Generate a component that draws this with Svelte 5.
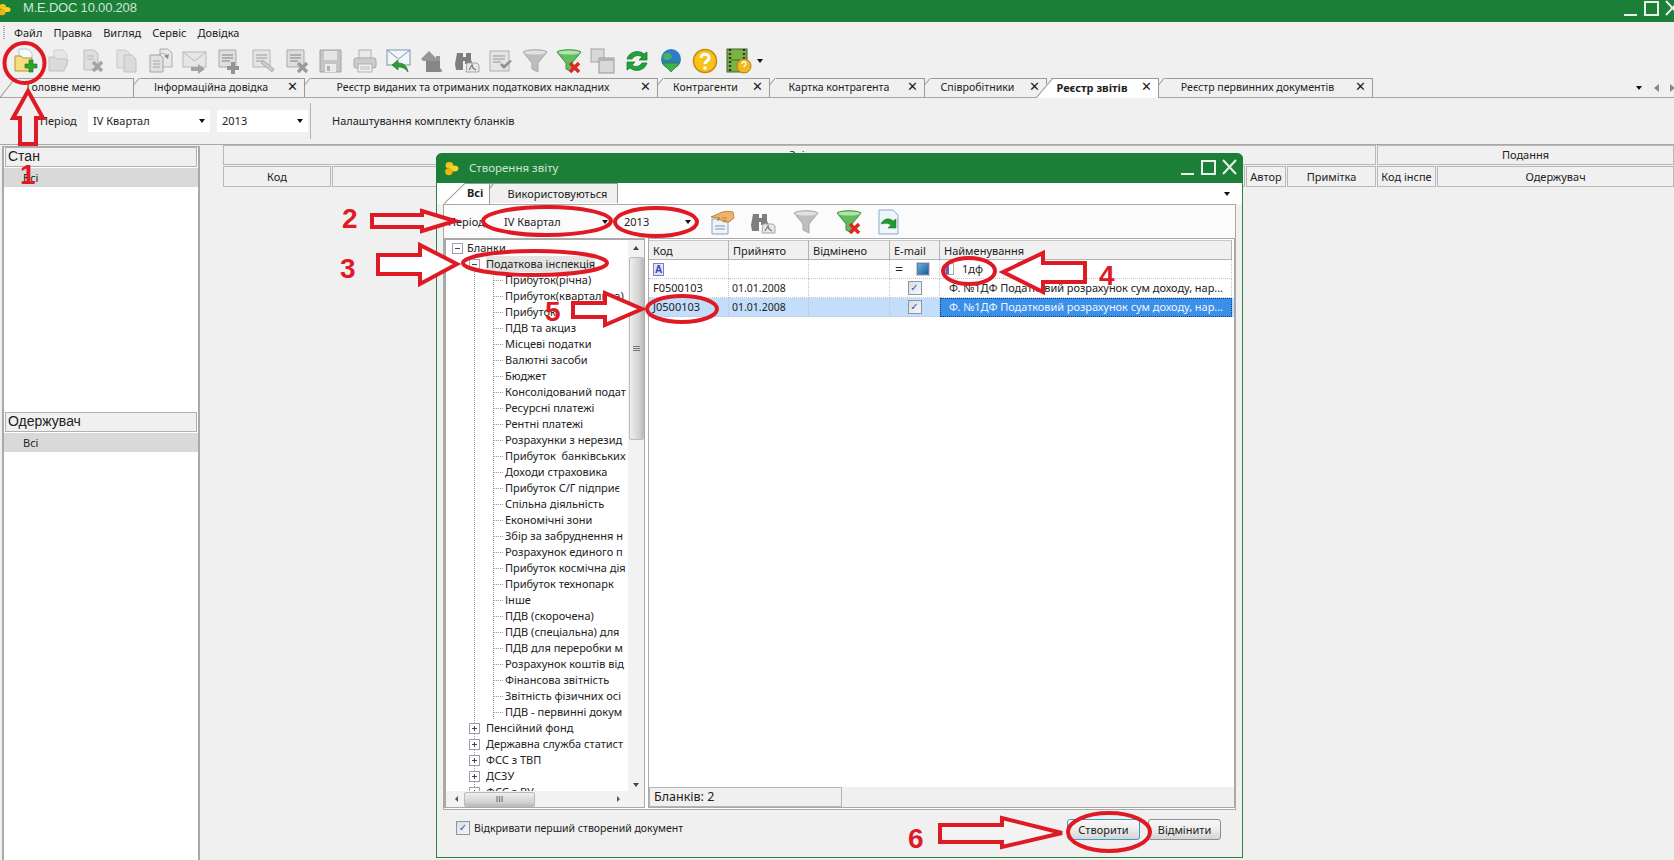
<script>
  const tools = ['new','open','docx','copy','docs','mail','docplus','docedit','docx2','floppy','printer','mailgreen','house','binoc','doccheck','funnel','funnelx','windows','sync','globe','help','film'];
  const tabs = [
    { t:'Головне меню', w:134, first:true, noX:true },
    { t:'Інформаційна довідка', w:171 },
    { t:'Реєстр виданих та отриманих податкових накладних', w:353 },
    { t:'Контрагенти', w:112 },
    { t:'Картка контрагента', w:155 },
    { t:'Співробітники', w:122 },
    { t:'Реєстр звітів', w:122, active:true },
    { t:'Реєстр первинних документів', w:214 }
  ];
  const leaves = ['Прибуток(річна)','Прибуток(квартальна)','Прибуток','ПДВ та акциз','Місцеві податки','Валютні засоби','Бюджет','Консолідований подат','Ресурсні платежі','Рентні платежі','Розрахунки з нерезид','Прибуток  банківських','Доходи страховика','Прибуток С/Г підприє','Спільна діяльність','Економічні зони','Збір за забруднення н','Розрахунок единого п','Прибуток космічна дія','Прибуток технопарк','Інше','ПДВ (скорочена)','ПДВ (спеціальна) для','ПДВ для переробки м','Розрахунок коштів від','Фінансова звітність','Звітність фізичних осі','ПДВ - первинні докум'];
  const groups = ['Пенсійний фонд','Державна служба статист','ФСС з ТВП','ДСЗУ','ФСС з ВУ'];
  const doc = 'Ф. №1ДФ Податковий розрахунок сум доходу, нар...';
</script>

{#snippet icon(n, s = 26)}
  <svg class="ic" width={s} height={s} viewBox="0 0 26 26" aria-hidden="true">
    {#if n==='new'}
      <path d="M7 1h9l4 4v11H7z" fill="#f7fafd" stroke="#b9c6d6"/>
      <path d="M3 8h6l2 2h9l-2 13H3z" fill="#f6dd7e" stroke="#b8922e"/>
      <path d="M17 12h4v4h4v4h-4v4h-4v-4h-4v-4h4z" fill="#27a52f" stroke="#17702a" stroke-width=".6"/>
    {:else if n==='open'}
      <path d="M8 2h9l4 4v12H8z" fill="#e6e6e6" stroke="#cfcfcf"/>
      <path d="M3 9h6l2 2h8l3 1-4 11H3z" fill="#dadada" stroke="#c2c2c2"/>
    {:else if n==='docx'}
      <path d="M4 2h10l4 4v16H4z" fill="#dedede" stroke="#bdbdbd"/>
      <path d="M7 8h7M7 11h7" stroke="#b8b8b8"/>
      <path d="M13 14l9 9M22 14l-9 9" stroke="#a4a4a4" stroke-width="3.400"/>
    {:else if n==='copy'}
      <path d="M3 2h9l4 4v14H3z" fill="#e2e2e2" stroke="#cacaca"/>
      <path d="M10 7h8l4 4v13H10z" fill="#dadada" stroke="#c2c2c2"/>
    {:else if n==='docs'}
      <path d="M12 1h8l4 4v14H12z" fill="#e8e8e8" stroke="#ababab"/>
      <path d="M2 7h10l3 3v14H2z" fill="#e0e0e0" stroke="#a6a6a6"/>
      <path d="M5 13h7M5 16h7M5 19h7" stroke="#aaa"/>
      <path d="M9 9c3-4 7-4 9-2l-2 1 4 3 1-5-2 1c-3-3-8-2-10 2z" fill="#8c8c8c"/>
    {:else if n==='mail'}
      <rect x="1" y="4" width="23" height="15" fill="#e6e6e6" stroke="#b8b8b8"/>
      <path d="M1 4l11.500 9L24 4" fill="none" stroke="#b8b8b8"/>
      <path d="M9 19h7v-3l7 5-7 5v-3H9z" fill="#a2a2a2"/>
    {:else if n==='docplus'}
      <path d="M3 2h17v17H3z" fill="#dedede" stroke="#a9a9a9"/>
      <path d="M6 7h11M6 10h11M6 13h8" stroke="#a0a0a0" stroke-width="1.400"/>
      <path d="M15 14h4v4h4v4h-4v4h-4v-4h-4v-4h4z" fill="#949494"/>
    {:else if n==='docedit'}
      <path d="M3 2h17v17H3z" fill="#e4e4e4" stroke="#b6b6b6"/>
      <path d="M6 7h11M6 10h11M6 13h8" stroke="#b2b2b2" stroke-width="1.400"/>
      <path d="M11 15l3-2 10 8-2 3z" fill="#cacaca" stroke="#aeaeae"/>
    {:else if n==='docx2'}
      <path d="M3 2h17v17H3z" fill="#dedede" stroke="#a9a9a9"/>
      <path d="M6 7h11M6 10h11M6 13h8" stroke="#a0a0a0" stroke-width="1.400"/>
      <path d="M14 15l9 9M23 15l-9 9" stroke="#9a9a9a" stroke-width="3.400"/>
    {:else if n==='floppy'}
      <path d="M2 2h21v22H2z" fill="#c4c4c4" stroke="#a4a4a4"/>
      <rect x="6" y="3" width="13" height="9" fill="#e4e4e4"/>
      <rect x="7" y="16" width="11" height="8" fill="#eaeaea"/>
      <rect x="9" y="18" width="3" height="5" fill="#b0b0b0"/>
    {:else if n==='printer'}
      <rect x="7" y="2" width="12" height="9" fill="#eaeaea" stroke="#b0b0b0"/>
      <rect x="2" y="10" width="22" height="10" rx="2" fill="#cccccc" stroke="#a8a8a8"/>
      <rect x="6" y="16" width="14" height="8" fill="#f0f0f0" stroke="#b0b0b0"/>
      <path d="M8 19h10M8 21h10" stroke="#bbb"/>
    {:else if n==='mailgreen'}
      <rect x="1" y="2" width="23" height="15" fill="#f2f6fb" stroke="#7f93ad"/>
      <path d="M1 2l11.500 9L24 2" fill="none" stroke="#7f93ad"/>
      <path d="M6 17l6-5v3c6 0 9 3 10 9-3-4-6-5-10-5v3z" fill="#2ca02c" stroke="#176c1d" stroke-width=".6"/>
    {:else if n==='house'}
      <path d="M1 11L9 3l7 7v-2h4v12l2 2v2H6V13H3z" fill="#979797"/>
      <path d="M6 13h14v11H6z" fill="#868686"/>
    {:else if n==='binoc'}
      <path d="M3 5h6v4h3V5h5v7l2 4H11v-3H9v9H2l-1-6z" fill="#7e7e7e"/>
      <path d="M13 15h10l2 2v7H12z" fill="#e8e8e8" stroke="#a6a6a6"/>
      <path d="M15 22l3-5 1 3 3 2" fill="none" stroke="#777" stroke-width="1.200"/>
    {:else if n==='doccheck'}
      <rect x="2" y="3" width="19" height="20" fill="#e4e4e4" stroke="#aeaeae"/>
      <path d="M5 8h12M5 11h12M5 14h8" stroke="#aeaeae" stroke-width="1.400"/>
      <path d="M12 17l4 4 8-8-2-1-6 5-2-2z" fill="#909090"/>
    {:else if n==='funnel'}
      <path d="M1 4c4-3 20-3 24 0l-9 11v9l-6-3v-6z" fill="#bebebe" stroke="#a8a8a8"/>
      <ellipse cx="13" cy="4.500" rx="11" ry="2" fill="#e0e0e0"/>
    {:else if n==='funnelx'}
      <path d="M1 4c4-3 20-3 24 0l-9 11v9l-6-3v-6z" fill="#62bb5e" stroke="#3b9040"/>
      <ellipse cx="13" cy="4.500" rx="11" ry="2" fill="#b2e3ac"/>
      <path d="M14 15l9 9M23 15l-9 9" stroke="#db2b20" stroke-width="3.600"/>
    {:else if n==='windows'}
      <rect x="1" y="1" width="13" height="13" fill="#d8d8d8" stroke="#a4a4a4"/>
      <rect x="9" y="10" width="15" height="15" fill="#d8d8d8" stroke="#959595"/>
      <rect x="9" y="10" width="15" height="3" fill="#b4b4b4"/>
    {:else if n==='sync'}
      <path d="M3 11C5 4 14 1 20 6l3-2v8h-8l3-3c-4-3-8-1-10 2z" fill="#22a33a" stroke="#10702a" stroke-width=".7"/>
      <path d="M23 15c-2 7-11 10-17 5l-3 2v-8h8l-3 3c4 3 8 1 10-2z" fill="#22a33a" stroke="#10702a" stroke-width=".7"/>
    {:else if n==='globe'}
      <circle cx="13" cy="11" r="10" fill="#2c7dc6"/>
      <path d="M5 7c3-3 6-3 8 0s-1 5-4 5-4-2-4-5z" fill="#4dae5e"/>
      <path d="M4 15h18l-9 9z" fill="#3db24a" stroke="#208030" stroke-width=".7"/>
    {:else if n==='help'}
      <circle cx="13" cy="13" r="11.500" fill="#f7c21e" stroke="#c98a0c" stroke-width="1.500"/>
      <path d="M9 10c0-5 8-5 8 0 0 3-4 3-4 6" fill="none" stroke="#fff" stroke-width="3"/>
      <circle cx="13" cy="20" r="1.800" fill="#fff"/>
    {:else if n==='film'}
      <rect x="1" y="1" width="20" height="23" fill="#79b342" stroke="#4a5f33"/>
      <path d="M4 1v23M18 1v23" stroke="#333" stroke-width="2.400" stroke-dasharray="2 2"/>
      <path d="M5 12h12" stroke="#3d6a20"/>
      <circle cx="18" cy="18" r="7" fill="#f3b81e" stroke="#b07f14"/>
      <path d="M16 16c0-3 4-3 4 0 0 1.500-2 1.500-2 3" fill="none" stroke="#fff" stroke-width="1.300"/>
    {:else if n==='hand'}
      <path d="M3 10h16v15H3z" fill="#eef3f9" stroke="#8ea3bd"/>
      <path d="M6 17h10M6 20h10" stroke="#7d93ad"/>
      <path d="M2 8l9-4c4-2 9-2 13-1l1 6-5 4-5 0-3-2-4 0 3-2-2 0z" fill="#eeb268" stroke="#a77434" stroke-width=".8"/>
      <path d="M13 9l5 0M14 11.500l4 0" stroke="#a77434" stroke-width=".7"/>
    {:else if n==='arrowdoc'}
      <path d="M3 1h14l5 5v19H3z" fill="#eef5fc" stroke="#8ea9c8"/>
      <path d="M5 15c2-5 8-7 12-3l3-2v9h-8l3-3c-3-2-6-2-10-1z" fill="#1f9a33" stroke="#126d22" stroke-width=".5"/>
    {/if}
  </svg>
{/snippet}

{#snippet blob(s)}
  <svg width={s} height={s} viewBox="0 0 14 14" aria-hidden="true">
    <ellipse cx="5" cy="4" rx="3.500" ry="3" fill="#f5c518"/>
    <ellipse cx="9.500" cy="7" rx="4" ry="2.800" fill="#f8d42a"/>
    <ellipse cx="4.500" cy="10" rx="3.500" ry="3.200" fill="#eeb412"/>
  </svg>
{/snippet}

{#snippet expander(minus)}
  <svg class="exp" width="11" height="11" viewBox="0 0 11 11" aria-hidden="true">
    <rect x=".5" y=".5" width="10" height="10" fill="#fff" stroke="#9aa3ad"/>
    <path d={minus ? 'M3 5.500h5' : 'M3 5.500h5M5.500 3v5'} stroke="#445"/>
  </svg>
{/snippet}

{#snippet wincontrols()}
  <svg class="wc" width="56" height="20" viewBox="0 0 56 20" aria-hidden="true">
    <path d="M0 16h13" stroke="#e8f2e8" stroke-width="2"/>
    <rect x="21" y="3" width="13" height="13" fill="none" stroke="#e8f2e8" stroke-width="2"/>
    <path d="M42 2l13 14M55 2L42 16" stroke="#e8f2e8" stroke-width="2"/>
  </svg>
{/snippet}

<div class="app">
  <header class="titlebar">
    <span class="logo">{@render blob(13)}</span>
    <span class="apptitle">M.E.DOC 10.00.208</span>
    <span class="wc-main">{@render wincontrols()}</span>
  </header>

  <nav class="menubar">
    <span class="grip"></span>
    <span>Файл</span><span>Правка</span><span>Вигляд</span><span>Сервіс</span><span>Довідка</span>
  </nav>

  <div class="toolbar">
    {#each tools as t}
      <span class="tool">{@render icon(t)}</span>
    {/each}
    <span class="caret tool-caret"></span>
  </div>

  <div class="tabs">
    {#each tabs as t}
      <div class="tab" class:first={t.first} class:active={t.active} style="width:{t.w}px">
        <span class="tab-t">{t.t}</span>
        {#if !t.noX}<span class="tab-x">✕</span>{/if}
      </div>
    {/each}
    <div class="tab-nav">
      <span class="caret"></span>
      <span class="tri-l"></span>
      <span class="tri-r"></span>
    </div>
  </div>

  <div class="subbar">
    <span class="lbl">Період</span>
    <div class="combo c1"><span>IV Квартал</span><i class="caret"></i></div>
    <div class="combo c2"><span>2013</span><i class="caret"></i></div>
    <span class="sep"></span>
    <span class="setup">Налаштування комплекту бланків</span>
  </div>

  <main class="main">
    <aside class="left">
      <div class="lh">Стан</div>
      <div class="lrow">Всі</div>
      <div class="lspace"></div>
      <div class="lh">Одержувач</div>
      <div class="lrow">Всі</div>
    </aside>
    <section class="bg-grid">
      <div class="gr g1">
        <div class="gc" style="width:1153px">Звіт</div>
        <div class="gc gc-last">Подання</div>
      </div>
      <div class="gr g2">
        <div class="gc" style="width:108px">Код</div>
        <div class="gc" style="width:913px"></div>
        <div class="gc" style="width:40px">Автор</div>
        <div class="gc" style="width:89px">Примітка</div>
        <div class="gc" style="width:59px">Код інспе</div>
        <div class="gc gc-last">Одержувач</div>
      </div>
    </section>
  </main>

  <div class="dialog">
    <div class="d-title">
      <span class="d-logo">{@render blob(15)}</span>
      <span class="d-name">Створення звіту</span>
      <span class="d-wc">{@render wincontrols()}</span>
    </div>
    <div class="d-tabs">
      <div class="dt dt-active">Всі</div>
      <div class="dt">Використовуються</div>
      <span class="caret d-caret"></span>
    </div>
    <div class="frame">
      <div class="period">
        <span class="p-lbl">Період</span>
        <div class="combo d1"><span>IV Квартал</span><i class="caret"></i></div>
        <div class="combo d2"><span>2013</span><i class="caret"></i></div>
        <div class="d-tools">
          <span class="dtool" style="width:41px">{@render icon('hand')}</span>
          <span class="dtool" style="width:41px">{@render icon('binoc')}</span>
          <span class="dtool" style="width:45px">{@render icon('funnel')}</span>
          <span class="dtool" style="width:41px">{@render icon('funnelx')}</span>
          <span class="dtool" style="width:39px">{@render icon('arrowdoc')}</span>
        </div>
      </div>
      <div class="split">
        <div class="tree">
          <div class="tree-body">
            <div class="tree-list">
              <div class="tr l0">{@render expander(true)}<span>Бланки</span></div>
              <div class="tr l1 line2">{@render expander(true)}<span class="tree-sel">Податкова інспекція</span></div>
              {#each leaves as l}
                <div class="tr l2"><span>{l}</span></div>
              {/each}
              {#each groups as g}
                <div class="tr l1 line2">{@render expander(false)}<span>{g}</span></div>
              {/each}
            </div>
            <div class="vbar">
              <span class="tri-up"></span>
              <div class="vthumb"><b></b><b></b><b></b></div>
              <span class="vfill"></span>
              <span class="tri-down"></span>
            </div>
          </div>
          <div class="hbar">
            <span class="tri-l small"></span>
            <div class="hthumb">III</div>
            <span class="vfill"></span>
            <span class="tri-r small"></span>
          </div>
        </div>
        <div class="gridpane">
          <div class="dg dg-head">
            <div>Код</div><div>Прийнято</div><div>Відмінено</div><div>E-mail</div><div>Найменування</div>
          </div>
          <div class="dg dg-row filter">
            <div><span class="abox">A</span></div>
            <div></div>
            <div></div>
            <div class="fmail"><span class="eq">=</span><span class="bluesq"></span></div>
            <div class="fname"><span class="fdoc"></span><span>1дф</span></div>
          </div>
          <div class="dg dg-row">
            <div>F0500103</div><div class="dt-cell">01.01.2008</div><div></div>
            <div class="chk"><span class="cb">✓</span></div>
            <div class="nm">{doc}</div>
          </div>
          <div class="dg dg-row sel">
            <div>J0500103</div><div class="dt-cell">01.01.2008</div><div></div>
            <div class="chk"><span class="cb">✓</span></div>
            <div class="nm nm-sel">{doc}</div>
          </div>
          <div class="gridspace"></div>
          <div class="status"><span class="st-box">Бланків: 2</span></div>
        </div>
      </div>
    </div>
    <div class="d-foot">
      <label class="openfirst"><span class="cb cb-foot">✓</span><span class="of-t">Відкривати перший створений документ</span></label>
      <div class="btns">
        <button class="btn primary">Створити</button>
        <button class="btn">Відмінити</button>
      </div>
    </div>
  </div>

  <svg class="marks" width="1674" height="860" viewBox="0 0 1674 860" aria-hidden="false">
    <g fill="none" stroke="#e01a24" stroke-width="4">
      <ellipse cx="24.500" cy="63" rx="20" ry="20"/>
      <ellipse cx="547" cy="221" rx="64" ry="14"/>
      <ellipse cx="656" cy="222" rx="41" ry="14"/>
      <ellipse cx="535" cy="263" rx="72" ry="12"/>
      <ellipse cx="682" cy="309" rx="35" ry="13"/>
      <ellipse cx="969" cy="271" rx="26" ry="13"/>
      <ellipse cx="1109" cy="832" rx="41" ry="19"/>
    </g>
    <g stroke="#e01a24" stroke-width="4" stroke-linejoin="miter">
      <path d="M28 91L43 118H36V144H20V118H13Z" fill="#f0f0f0"/>
      <path d="M372 215H422V211L455 221L422 231V227H372Z" fill="#f4f4f4"/>
      <path d="M378 255H420V245L457 264L420 284V274H378Z" fill="#fff"/>
      <path d="M573 303H605V293L642 309L605 325V317H573Z" fill="#fff"/>
      <path d="M1085 263H1043V253L1003 272L1043 292V282H1085Z" fill="#fff"/>
      <path d="M940 825H1002V818L1062 833L1002 847V842H940Z" fill="#f4f4f4"/>
    </g>
    <g class="nums" fill="#e01a24">
      <text x="20" y="184">1</text>
      <text x="342" y="228">2</text>
      <text x="340" y="278">3</text>
      <text x="1099" y="285">4</text>
      <text x="545" y="321">5</text>
      <text x="908" y="848">6</text>
    </g>
  </svg>
</div>

<style>
  :global(body) { margin: 0; background: #f0f0f0; }
  .app {
    position: relative; width: 1674px; height: 860px; overflow: hidden;
    display: flex; flex-direction: column; background: #f0f0f0; color: #222;
    font: 11px/1.2 "Noto Sans", "Liberation Sans", sans-serif;
  }
  .titlebar { height: 22px; flex: none; background: #1c7f38; display: flex; align-items: center; color: #cfe6d3; }
  .logo { width: 23px; display: flex; margin-left: -2px; padding-bottom: 3px; }
  .apptitle { font: 13px "Liberation Sans", sans-serif; margin-top: -7px; margin-left: 2px; letter-spacing: -.2px; }
  .wc-main { margin-left: auto; margin-right: -6px; display: flex; margin-top: -4px; }
  .menubar { height: 22px; flex: none; display: flex; align-items: center; padding-left: 14px; gap: 11px; }
  .grip { position: absolute; left: 3px; top: 26px; width: 2px; height: 13px; background: repeating-linear-gradient(#aaa 0 1px, transparent 1px 2px); }
  .toolbar { height: 34px; flex: none; display: flex; align-items: center; padding-left: 12px; gap: 8px; }
  .tool { width: 26px; height: 26px; display: flex; }
  .ic { display: block; }
  .caret { display: inline-block; width: 0; height: 0; border: 3.500px solid transparent; border-top: 4px solid #111; border-bottom: 0; }
  .tool-caret { margin-left: -3px; }
  .tabs { height: 20px; flex: none; display: flex; border-bottom: 1px solid #a6a6a6; box-sizing: border-box; position: relative; font-size: 10.600px; }
  .tab { position: relative; box-sizing: border-box; height: 19px; border-right: 1px solid #9a9a9a; display: flex; align-items: center; justify-content: center; background: #f0f0f0; padding-right: 16px; }
  .tab::before { content: ""; position: absolute; left: 2px; top: -1px; width: 1px; height: 9px; background: #9a9a9a; transform: rotate(40deg); }
  .tab::after { content: ""; position: absolute; left: 6px; right: 0; top: 0; height: 1px; background: #9a9a9a; }
  .tab-t { white-space: nowrap; }
  .tab-x { position: absolute; right: 6px; top: 2px; font: 700 13px/14px "DejaVu Sans", sans-serif; color: #222; }
  .tab.first { background: none; padding-right: 6px; }
  .tab.first::before { left: 7px; top: -2px; height: 24px; transform: rotate(38deg); }
  .tab.first::after { left: 13px; }
  .tab.active {
    margin-left: -10px; z-index: 1; height: 20px; font-weight: 700; padding-right: 0;
    background: linear-gradient(130deg, transparent 11px, #fff 11.500px);
  }
  .tab.active .tab-t { margin-right: 27px; margin-left: 16px; font-size: 11px; }
  .tab.active::before { left: 7px; top: -2px; height: 24px; transform: rotate(40deg); }
  .tab.active::after { left: 14px; }
  .tab-nav { position: absolute; right: 0; top: 0; height: 19px; display: flex; align-items: center; }
  .tab-nav .caret { margin-right: 12px; }
  .tri-l { width: 0; height: 0; border: 4px solid transparent; border-right: 5px solid #888; border-left: 0; margin-right: 11px; }
  .tri-r { width: 0; height: 0; border: 4px solid transparent; border-left: 5px solid #888; border-right: 0; margin-right: -1px; }
  .tri-l.small { border-width: 3px; border-right: 3px solid #555; border-left: 0; margin: 0; }
  .tri-r.small { border-width: 3px; border-left: 3px solid #555; border-right: 0; margin: 0; }
  .subbar { height: 47px; flex: none; display: flex; align-items: center; padding-left: 40px; border-bottom: 1px solid #a8a8a8; box-sizing: border-box; }
  .lbl { width: 48px; }
  .combo { background: #fff; height: 22px; box-sizing: border-box; display: flex; align-items: center; justify-content: space-between; padding: 0 4px 0 5px; }
  .combo .caret { margin-right: 0; }
  .c1 { width: 122px; }
  .c2 { width: 91px; margin-left: 7px; }
  .c1 .caret, .c2 .caret { margin-right: 1px; }
  .sep { width: 1px; height: 36px; background: #b4b4b4; margin-left: 2px; }
  .setup { margin-left: 21px; }
  .main { flex: 1; min-height: 0; display: flex; padding-left: 2px; }
  .left { width: 198px; box-sizing: border-box; border: 2px solid #a9a9a9; border-bottom: 0; border-top-width: 1px; background: #fff; display: flex; flex-direction: column; margin-top: 1px; }
  .lh { height: 20px; background: #f0f0f0; border: 1px solid #b0b0b0; margin: 0 1px; flex: none; font: 14px/17px "Liberation Sans", sans-serif; padding-left: 2px; box-sizing: border-box; }
  .lrow { height: 19px; line-height: 19px; background: #d9d9d9; padding-left: 19px; margin-top: 1px; flex: none; }
  .lspace { height: 225px; flex: none; }
  .bg-grid { margin-left: 23px; flex: 1; min-width: 0; }
  .gr { display: flex; gap: 1px; margin-bottom: 1px; }
  .g1 .gc { height: 20px; line-height: 18px; }
  .g2 .gc { height: 21px; line-height: 19px; }
  .gc { background: #f0f0f0; border: 1px solid #b8b8b8; box-sizing: border-box; text-align: center; flex: none; white-space: nowrap; overflow: hidden; }
  .gc-last { flex: 1; }

  .dialog {
    position: absolute; left: 436px; top: 153px; width: 807px; height: 705px; box-sizing: border-box;
    border: 1px solid #2a8442; border-top: 0; border-radius: 6px 6px 0 0; background: #f0f0f0;
    display: flex; flex-direction: column;
  }
  .d-title { height: 30px; flex: none; background: #1c7f38; border-radius: 6px 6px 0 0; display: flex; align-items: center; color: #cfe6d3; margin: 0 -1px; }
  .d-logo { display: flex; margin-left: 8px; }
  .d-name { margin-left: 10px; font-size: 11.500px; }
  .d-wc { margin-left: auto; margin-right: 6px; display: flex; }
  .d-tabs { height: 21px; flex: none; background: #fff; display: flex; padding-left: 7px; position: relative; }
  .d-caret { position: absolute; right: 12px; top: 9px; }
  .dt { position: relative; height: 20px; box-sizing: border-box; border-top: 1px solid #9a9a9a; border-right: 1px solid #9a9a9a; background: #f0f0f0; width: 128px; text-align: center; line-height: 19px; padding-left: 8px; }
  .dt::before { content: ""; position: absolute; left: 1px; top: -2px; width: 1px; height: 8px; background: #9a9a9a; transform: rotate(40deg); }
  .dt-active { width: 46px; background: linear-gradient(135deg, transparent 15px, #fff 15.500px); font-weight: 700; padding-left: 23px; text-align: left; height: 21px; border-top: 0; }
  .dt-active::before { left: 10px; top: -4px; height: 29px; transform: rotate(46deg); }
  .dt-active::after { content: ""; position: absolute; left: 21px; right: 0; top: 0; height: 1px; background: #9a9a9a; }
  .frame { margin: 0 6px; height: 606px; box-sizing: border-box; flex: none; border: 1px solid #a9a9a9; background: #fff; display: flex; flex-direction: column; }
  .period { height: 33px; flex: none; display: flex; align-items: center; padding-left: 4px; background: #fbfbfb; }
  .p-lbl { width: 42px; }
  .d1 { width: 122px; padding-left: 14px; background: transparent; }
  .d2 { width: 78px; margin-left: 5px; padding-left: 7px; background: transparent; }
  .d-tools { display: flex; margin-left: 6px; }
  .dtool { display: flex; justify-content: center; }
  .split { flex: 1; min-height: 0; display: flex; gap: 3px; }
  .tree { width: 201px; box-sizing: border-box; border: 2px solid #a9a9a9; border-bottom-width: 1px; border-right-width: 1px; display: flex; flex-direction: column; background: #fff; margin-bottom: 1px; }
  .tree-body { flex: 1; min-height: 0; display: flex; }
  .tree-list { flex: 1; min-width: 0; overflow: hidden; }
  .tr { height: 16px; line-height: 16px; white-space: pre; overflow: hidden; display: flex; align-items: center; position: relative; }
  .exp { flex: none; }
  .l0 { padding-left: 6px; }
  .l0 span { margin-left: 4px; }
  .l1 { padding-left: 23px; }
  .l1 span { margin-left: 6px; }
  .tree-sel { background: #e4e4e4; }
  .l2 { padding-left: 59px; }
  .l1.line2 { background: repeating-linear-gradient(#999 0 1px, transparent 1px 2px) no-repeat 28px 0 / 1px 100%; }
  .l2 {
    background:
      repeating-linear-gradient(#999 0 1px, transparent 1px 2px) no-repeat 28px 0 / 1px 100%,
      repeating-linear-gradient(#999 0 1px, transparent 1px 2px) no-repeat 47px 0 / 1px 100%,
      repeating-linear-gradient(90deg, #999 0 1px, transparent 1px 2px) no-repeat 48px 8px / 9px 1px;
  }
  .vbar { width: 16px; flex: none; background: #f2f2f2; display: flex; flex-direction: column; align-items: center; }
  .tri-up { width: 0; height: 0; border: 3px solid transparent; border-bottom: 4px solid #444; border-top: 0; margin: 6px 0 7px; }
  .tri-down { width: 0; height: 0; border: 3px solid transparent; border-top: 4px solid #444; border-bottom: 0; margin: 7px 0 4px; }
  .vthumb { width: 15px; height: 183px; background: linear-gradient(90deg, #eee, #d2d2d2 70%, #bbb); border: 1px solid #bbb; box-sizing: border-box; border-radius: 2px; display: flex; flex-direction: column; align-items: center; justify-content: center; gap: 1px; }
  .vthumb b { width: 7px; height: 1px; background: #777; }
  .vfill { flex: 1; }
  .hbar { height: 16px; flex: none; background: #f2f2f2; display: flex; align-items: center; padding: 0 24px 0 9px; }
  .hthumb { width: 71px; height: 15px; margin-left: 6px; background: linear-gradient(#eee, #d2d2d2 70%, #bbb); border: 1px solid #bbb; box-sizing: border-box; border-radius: 2px; text-align: center; font: 9px/13px "Liberation Sans", sans-serif; color: #555; }
  .gridpane { flex: 1; min-width: 0; box-sizing: border-box; border: 1px solid #a9a9a9; background: #fff; margin-bottom: 1px; display: flex; flex-direction: column; padding-top: 1px; }
  .dg { display: grid; grid-template-columns: 80px 80px 81px 50px 292px; flex: none; white-space: nowrap; }
  .dg > div { overflow: hidden; padding-left: 4px; box-sizing: border-box; }
  .dg > .dt-cell { padding-left: 3px; font-size: 10.500px; }
  .dg-head { height: 20px; line-height: 19px; }
  .dg-head > div { background: #f0f0f0; border-right: 1px solid #b4b4b4; border-bottom: 1px solid #b4b4b4; border-top: 1px solid #c8c8c8; }
  .dg-row { height: 19px; line-height: 18px; }
  .dg-row > div { border-right: 1px dotted #c4c4c4; border-bottom: 1px dotted #c4c4c4; }
  .abox { display: inline-block; width: 9px; height: 11px; margin-top: 3px; border: 1px solid #7a80c0; background: #dfe3fa; color: #3b42a8; font: 700 10px/11px "Liberation Sans", sans-serif; text-align: center; }
  .fmail { display: flex; align-items: center; padding-left: 5px !important; }
  .eq { width: 22px; font-size: 14px; }
  .bluesq { width: 10px; height: 10px; border: 1px solid #6a7fa0; outline: 1px solid #ccd; background: linear-gradient(135deg, #5fb2dc, #1f5f94); }
  .fname { display: flex; align-items: center; padding-left: 5px !important; }
  .fdoc { width: 7px; height: 10px; border: 1px solid #aaa; background: linear-gradient(90deg, #6a5bd0 50%, #fff 50%); margin-right: 8px; }
  .chk { display: flex; justify-content: center; align-items: center; padding-left: 0 !important; }
  .cb { display: inline-flex; justify-content: center; align-items: center; width: 12px; height: 12px; border: 1px solid #8f96a3; background: linear-gradient(135deg, #d8dde6, #f6f7fa); color: #3d4fa0; font: 700 10px/1 "DejaVu Sans", sans-serif; }
  .nm { padding-left: 9px !important; letter-spacing: -.05px; }
  .sel { background: #c2defa; }
  .nm-sel { background: #3a8fe8; color: #f0f6ff; outline: 1px dotted #123f80; outline-offset: -1px; }
  .gridspace { flex: 1; }
  .status { height: 20px; flex: none; background: #f0f0f0; }
  .st-box { display: block; width: 193px; height: 20px; box-sizing: border-box; border: 1px solid #b4b4b4; padding-left: 4px; line-height: 18px; font-size: 12.500px; }
  .d-foot { flex: 1; display: flex; justify-content: space-between; padding: 9px 21px 0 19px; align-items: flex-start; }
  .openfirst { display: flex; align-items: center; gap: 4px; margin-top: 2px; }
  .of-t { font-size: 10.500px; }
  .btns { display: flex; gap: 8px; }
  .btn { width: 73px; height: 21px; padding: 0; border: 1px solid #8f8f8f; border-radius: 3px; background: linear-gradient(#f8f8f8, #ececec 50%, #d4d4d4); font: inherit; color: #222; }
  .primary { border-color: #3a9dc8; }
  .marks { position: absolute; left: 0; top: 0; pointer-events: none; }
  .nums text { font: 700 28px "Liberation Sans", sans-serif; }
</style>
